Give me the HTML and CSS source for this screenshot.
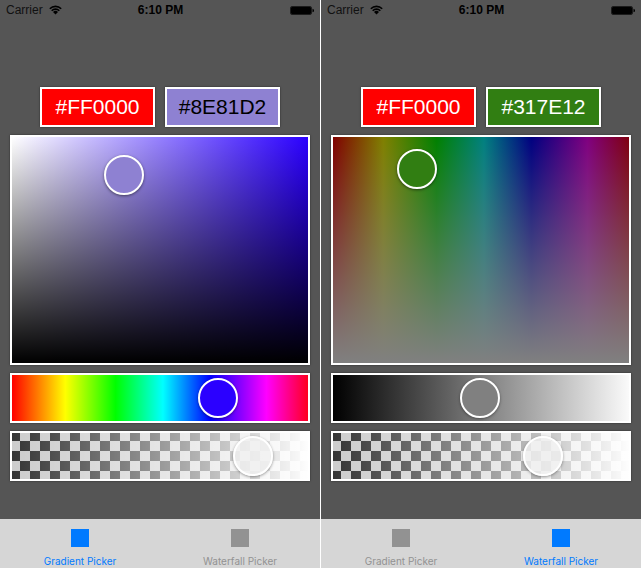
FILE: index.html
```html
<!DOCTYPE html>
<html lang="en">
<head>
<meta charset="utf-8">
<meta name="viewport" content="width=device-width, initial-scale=1">
<title>Color Picker</title>
<link rel="stylesheet" href="styles.css">
</head>
<body>
<main class="screens">
  <section class="screen" aria-label="Gradient Picker">
    <header class="status">
      <span class="carrier">Carrier
        <svg class="wifi" viewBox="0 0 13 10" aria-hidden="true"><path d="M.8 3.7a8.1 8.1 0 0 1 11.4 0M2.7 5.7a5.4 5.4 0 0 1 7.6 0"/><path class="solid" d="M6.5 9.6 4 7a3.6 3.6 0 0 1 5 0z"/></svg>
      </span>
      <time class="clock">6:10 PM</time>
      <svg class="battery" viewBox="0 0 25 9" aria-hidden="true"><rect class="case" x=".5" y=".5" width="21" height="8" rx="1.5"/><rect x="1" y="1" width="20" height="7" rx="1"/><path d="M22.5 2.7c2 .3 2 3.3 0 3.6z"/></svg>
    </header>
    <div class="picker">
      <div class="fields">
        <input class="swatch red" type="text" value="#FF0000" aria-label="Background color">
        <input class="swatch violet" type="text" value="#8E81D2" aria-label="Selected color">
      </div>
      <div class="map saturation"><button class="knob violet" type="button" aria-label="Saturation and brightness"></button></div>
      <input class="slider hue" type="range" min="0" max="1000" value="727" aria-label="Hue">
      <input class="slider alpha" type="range" min="0" max="1000" value="862" aria-label="Opacity">
    </div>
    <nav class="tabs">
      <a class="tab active" href="#gradient"><span class="tab-icon"></span>Gradient Picker</a>
      <a class="tab" href="#waterfall"><span class="tab-icon"></span>Waterfall Picker</a>
    </nav>
  </section>
  <section class="screen" aria-label="Waterfall Picker">
    <header class="status">
      <span class="carrier">Carrier
        <svg class="wifi" viewBox="0 0 13 10" aria-hidden="true"><path d="M.8 3.7a8.1 8.1 0 0 1 11.4 0M2.7 5.7a5.4 5.4 0 0 1 7.6 0"/><path class="solid" d="M6.5 9.6 4 7a3.6 3.6 0 0 1 5 0z"/></svg>
      </span>
      <time class="clock">6:10 PM</time>
      <svg class="battery" viewBox="0 0 25 9" aria-hidden="true"><rect class="case" x=".5" y=".5" width="21" height="8" rx="1.5"/><rect x="1" y="1" width="20" height="7" rx="1"/><path d="M22.5 2.7c2 .3 2 3.3 0 3.6z"/></svg>
    </header>
    <div class="picker">
      <div class="fields">
        <input class="swatch red" type="text" value="#FF0000" aria-label="Background color">
        <input class="swatch green" type="text" value="#317E12" aria-label="Selected color">
      </div>
      <div class="map waterfall"><button class="knob green" type="button" aria-label="Hue and saturation"></button></div>
      <input class="slider brightness" type="range" min="0" max="1000" value="496" aria-label="Brightness">
      <input class="slider alpha" type="range" min="0" max="1000" value="742" aria-label="Opacity">
    </div>
    <nav class="tabs">
      <a class="tab" href="#gradient"><span class="tab-icon"></span>Gradient Picker</a>
      <a class="tab active" href="#waterfall"><span class="tab-icon"></span>Waterfall Picker</a>
    </nav>
  </section>
</main>
</body>
</html>
```

FILE: styles.css
```css
* {
  box-sizing: border-box;
}

body {
  margin: 0;
  font-family: "Liberation Sans", Arial, sans-serif;
}

.screens {
  display: grid;
  grid-template-columns: repeat(2, minmax(0, 1fr));
  gap: 1px;
  min-height: 100vh;
  background: #fff;
}

.screen {
  display: flex;
  flex-direction: column;
  background: #555;
}

/* Status bar */
.status {
  display: grid;
  grid-template-columns: 1fr auto 1fr;
  align-items: center;
  height: 20px;
  padding: 0 5px 0 6px;
  font-size: 12px;
  line-height: 20px;
  color: #111;
}

.carrier {
  display: flex;
  align-items: center;
  gap: 6px;
}

.wifi {
  width: 13px;
  height: 10px;
  fill: none;
  stroke: #000;
  stroke-width: 1.6;
}

.wifi .solid {
  fill: #000;
  stroke: none;
}

.clock {
  font-weight: bold;
  color: #000;
}

.battery {
  justify-self: end;
  width: 25px;
  height: 9px;
}

.battery .case {
  fill: none;
  stroke: #1c1c1c;
}

/* Picker */
.picker {
  display: flex;
  flex-direction: column;
  gap: 8px;
  padding: 67px 10px 8px;
}

.fields {
  display: flex;
  gap: 10px;
  padding: 0 30px;
}

.swatch,
.map,
.slider {
  margin: 0;
  border: 2px solid #fff;
  border-radius: 0;
  box-shadow: 0 0 2px rgba(0, 0, 0, 0.5);
}

.swatch {
  flex: 1;
  min-width: 0;
  height: 40px;
  padding: 0;
  font: 21px "Liberation Sans", Arial, sans-serif;
  text-align: center;
  color: #fff;
}

.red {
  background: #f00;
}

.violet {
  background: #8e81d2;
}

.green {
  background: #317e12;
}

.swatch.violet {
  color: #000;
}

.map {
  position: relative;
  height: 230px;
}

.saturation {
  background:
    linear-gradient(to bottom, transparent, #000),
    linear-gradient(to right, #fff, #2b00ff);
}

.waterfall {
  background:
    linear-gradient(to bottom, rgba(128, 128, 128, 0), #808080),
    linear-gradient(to right, #800000, #808000 17%, #008000 35%, #008080 51%, #000080 67%, #800080 86%, #800010);
}

.knob {
  position: absolute;
  width: 40px;
  height: 40px;
  margin: -20px 0 0 -20px;
  padding: 0;
  border: 2px solid #fff;
  border-radius: 50%;
  box-shadow: 0 1px 3px rgba(0, 0, 0, 0.5);
}

.saturation .knob {
  left: 38%;
  top: 17%;
}

.waterfall .knob {
  left: 28.4%;
  top: 14%;
}

.slider {
  appearance: none;
  width: 100%;
  height: 50px;
}

.slider::-webkit-slider-thumb {
  appearance: none;
  width: 40px;
  height: 40px;
  border: 2px solid #fff;
  border-radius: 50%;
  background: #808080;
  box-shadow: 0 1px 3px rgba(0, 0, 0, 0.4);
}

.hue {
  background: linear-gradient(to right, #f00, #ff0 18%, #0f0 35%, #0ff 51%, #00f 67%, #f0f 86%, #ff0020);
}

.hue::-webkit-slider-thumb {
  background: #2b00ff;
}

.brightness {
  background: linear-gradient(to right, #000, #fafafa);
}

/* Checkerboard starts under the border, so the edge squares are cut short */
.alpha {
  background:
    linear-gradient(to right, rgba(255, 255, 255, 0), #fff) border-box,
    conic-gradient(#ccc 25%, #333 0 50%, #ccc 0 75%, #333 0) 0 0 / 20px 20px border-box;
}

.alpha::-webkit-slider-thumb {
  background: rgba(240, 240, 240, 0.8);
}

/* Tab bar */
.tabs {
  display: flex;
  margin-top: auto;
  height: 49px;
  background: #d6d6d6;
}

.tab {
  flex: 1;
  display: flex;
  flex-direction: column;
  align-items: center;
  gap: 8px;
  padding-top: 10px;
  font-family: Inter, "Liberation Sans", sans-serif;
  font-size: 10px;
  line-height: 12px;
  color: #929292;
  text-decoration: none;
}

.tab-icon {
  width: 18px;
  height: 18px;
  background: currentColor;
}

.active {
  color: #007aff;
}
```
